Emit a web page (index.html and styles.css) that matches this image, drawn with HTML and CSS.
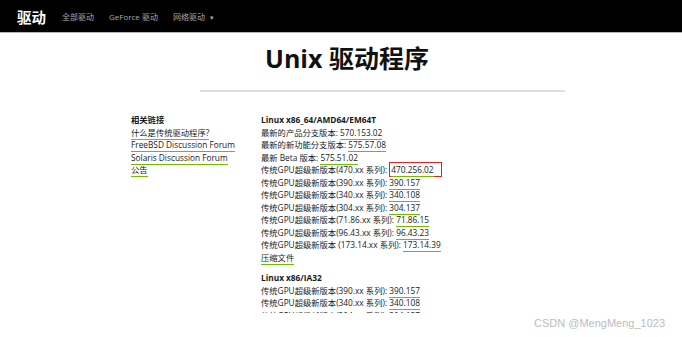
FILE: index.html
```html
<!DOCTYPE html>
<html lang="zh-CN">
  <head>
    <meta charset="UTF-8" />
    <meta name="viewport" content="width=device-width, initial-scale=1.0" />
    <title>Unix 驱动程序</title>
    <link rel="stylesheet" href="styles.css">
  </head>
  <body>
    <nav class="navbar">
      <span class="brand">驱动</span>
      <a class="nav-link" href="#">全部驱动</a>
      <a class="nav-link" href="#">GeForce 驱动</a>
      <a class="nav-link" href="#">网络驱动 <span class="caret">&#9662;</span></a>
    </nav>

    <main class="main">
      <h1 class="title">Unix 驱动程序</h1>
      <hr class="divider" />

      <div class="cols">
        <div class="side">
          <p class="head">相关链接</p>
          <p><a href="#">什么是传统驱动程序?</a></p>
          <p><a href="#">FreeBSD Discussion Forum</a></p>
          <p><a href="#">Solaris Discussion Forum</a></p>
          <p><a href="#">公告</a></p>
        </div>

        <div class="list">
          <p class="head">Linux x86_64/AMD64/EM64T</p>
          <p>最新的产品分支版本: <a href="#">570.153.02</a></p>
          <p>最新的新功能分支版本: <a href="#">575.57.08</a></p>
          <p>最新 Beta 版本: <a href="#">575.51.02</a></p>
          <p>传统GPU超级新版本(470.xx 系列): <span class="mark"><a href="#">470.256.02</a></span></p>
          <p>传统GPU超级新版本(390.xx 系列): <a href="#">390.157</a></p>
          <p>传统GPU超级新版本(340.xx 系列): <a href="#">340.108</a></p>
          <p>传统GPU超级新版本(304.xx 系列): <a href="#">304.137</a></p>
          <p>传统GPU超级新版本(71.86.xx 系列): <a href="#">71.86.15</a></p>
          <p>传统GPU超级新版本(96.43.xx 系列): <a href="#">96.43.23</a></p>
          <p>传统GPU超级新版本 (173.14.xx 系列): <a href="#">173.14.39</a></p>
          <p><a href="#">压缩文件</a></p>

          <p class="head gap">Linux x86/IA32</p>
          <p>传统GPU超级新版本(390.xx 系列): <a href="#">390.157</a></p>
          <p>传统GPU超级新版本(340.xx 系列): <a href="#">340.108</a></p>
          <p>传统GPU超级新版本(304.xx 系列): <a href="#">304.137</a></p>
          <p>传统GPU超级新版本(71.86.xx 系列): <a href="#">71.86.15</a></p>
        </div>
      </div>
    </main>

    <div class="watermark">CSDN @MengMeng_1023</div>
  </body>
</html>
```

FILE: styles.css
```css
* {
  box-sizing: border-box;
}

body {
  margin: 0;
  padding: 0;
  background: #fff;
  font-family: "Open Sans", "Noto Sans CJK SC", sans-serif;
  color: #1a1a1a;
}

.navbar {
  height: 33px;
  background: #000;
  border-bottom: 1px solid #b5b5b5;
  display: flex;
  align-items: center;
  padding-left: 17px;
}

.brand {
  color: #fff;
  font-size: 14.5px;
  font-weight: 700;
  margin-right: 16px;
}

.navbar .nav-link {
  color: #a8a8a8;
  font-size: 8px;
  border: none;
  padding: 0;
  margin-right: 15px;
}

.caret {
  font-size: 7px;
  margin-left: 3px;
}

.main {
  height: 280px;
  overflow: hidden;
}

.title {
  margin: 8px 0 0 12px;
  text-align: center;
  font-size: 25px;
  line-height: 34px;
  font-weight: 700;
  color: #111;
}

.divider {
  margin: 15px 117px 0 200px;
  border: none;
  border-top: 2px solid #e0e0e0;
}

.cols {
  display: flex;
  padding-left: 131px;
  margin-top: 22px;
}

.side {
  width: 130px;
}

p {
  margin: 0;
  font-size: 8.3px;
  line-height: 12.5px;
  white-space: nowrap;
}

.head {
  font-weight: 700;
}

.gap {
  margin-top: 8px;
}

a {
  color: #1a1a1a;
  text-decoration: none;
  border-bottom: 1px solid #76b900;
  padding-bottom: 1px;
}

.mark {
  border: 1px solid #e02424;
  padding: 1px 7px 1px 1px;
}

.watermark {
  position: absolute;
  right: 17px;
  bottom: 8px;
  font-family: "Liberation Sans", sans-serif;
  font-size: 11px;
  color: #bcbcbc;
}
```
